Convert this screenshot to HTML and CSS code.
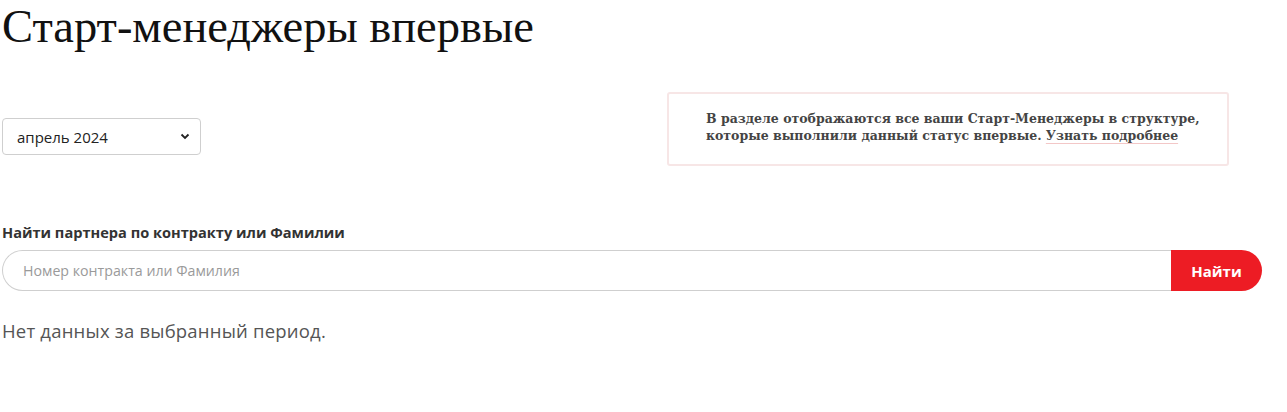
FILE: index.html
```html
<!DOCTYPE html>
<html lang="ru">
<head>
    <meta charset="UTF-8">
    <title>Старт-менеджеры впервые</title>
    <link rel="stylesheet" href="styles.css">
</head>
<body>
    <div id="page">
        <h1 class="page-title">Старт-менеджеры впервые</h1>

        <div class="top-row">
            <div class="period-select">
                <span>апрель 2024</span>
                <svg class="chevron" width="10" height="7" viewBox="0 0 10 7">
                    <path d="M1.5 1.5 L5 5 L8.5 1.5" fill="none" stroke="#222" stroke-width="1.8"/>
                </svg>
            </div>
            <div class="info-box">
                <p class="info-text">В разделе отображаются все ваши Старт-Менеджеры в структуре,</p>
                <p class="info-text">которые выполнили данный статус впервые. <a href="#" class="info-link">Узнать подробнее</a></p>
            </div>
        </div>

        <div class="search-block">
            <label for="search" class="search-label">Найти партнера по контракту или Фамилии</label>
            <div class="search-row">
                <input type="text" id="search" class="search-input" placeholder="Номер контракта или Фамилия">
                <button class="search-button">Найти</button>
            </div>
        </div>

        <p class="empty-text">Нет данных за выбранный период.</p>
    </div>
</body>
</html>
```

FILE: styles.css
```css
html, body {
    margin: 0;
    padding: 0;
    background-color: white;
}
#page {
    width: 1260px;
    padding-left: 2px;
    font-family: "Open Sans", sans-serif;
}
.page-title {
    margin: 0;
    padding-top: 3px;
    font-family: "Liberation Serif", serif;
    font-weight: normal;
    font-size: 46.5px;
    line-height: 48px;
    color: #111;
}
.top-row {
    display: flex;
    justify-content: space-between;
    align-items: flex-start;
    margin-top: 41px;
    padding-right: 33px;
}
.period-select {
    width: 199px;
    height: 37px;
    margin-top: 26px;
    box-sizing: border-box;
    display: flex;
    align-items: center;
    justify-content: space-between;
    padding: 0 10px 0 14px;
    border: 1px solid #cfcfcf;
    border-radius: 4px;
    font-size: 15px;
    color: #222;
}
.info-box {
    width: 562px;
    height: 74px;
    box-sizing: border-box;
    padding: 16px 20px 0 37px;
    border: 2px solid #f7e6e6;
    border-radius: 3px;
    font-family: "DejaVu Serif", serif;
    font-weight: bold;
    font-size: 12.5px;
    line-height: 17px;
    color: #444;
}
.info-text {
    margin: 0;
}
.info-link {
    color: #444;
    text-decoration: underline;
    text-decoration-color: #f3c7c7;
    text-underline-offset: 3px;
}
.search-block {
    margin-top: 56px;
}
.search-label {
    display: block;
    font-weight: bold;
    font-size: 14.6px;
    line-height: 20px;
    color: #333;
    margin-bottom: 8px;
}
.search-row {
    display: flex;
    height: 41px;
}
.search-input {
    flex: 1;
    box-sizing: border-box;
    height: 41px;
    padding: 0 20px;
    border: 1px solid #cfcfcf;
    border-right: none;
    border-radius: 21px 0 0 21px;
    font-family: "Open Sans", sans-serif;
    font-size: 14.2px;
    outline: none;
}
.search-input::placeholder {
    color: #9a9a9a;
}
.search-button {
    width: 91px;
    height: 41px;
    border: none;
    border-radius: 0 21px 21px 0;
    background-color: #ed1c24;
    color: white;
    font-family: "Open Sans", sans-serif;
    font-weight: bold;
    font-size: 15px;
    cursor: pointer;
}
.empty-text {
    margin: 28px 0 0;
    font-size: 18.5px;
    letter-spacing: 0.2px;
    line-height: 24px;
    color: #555;
}
```
